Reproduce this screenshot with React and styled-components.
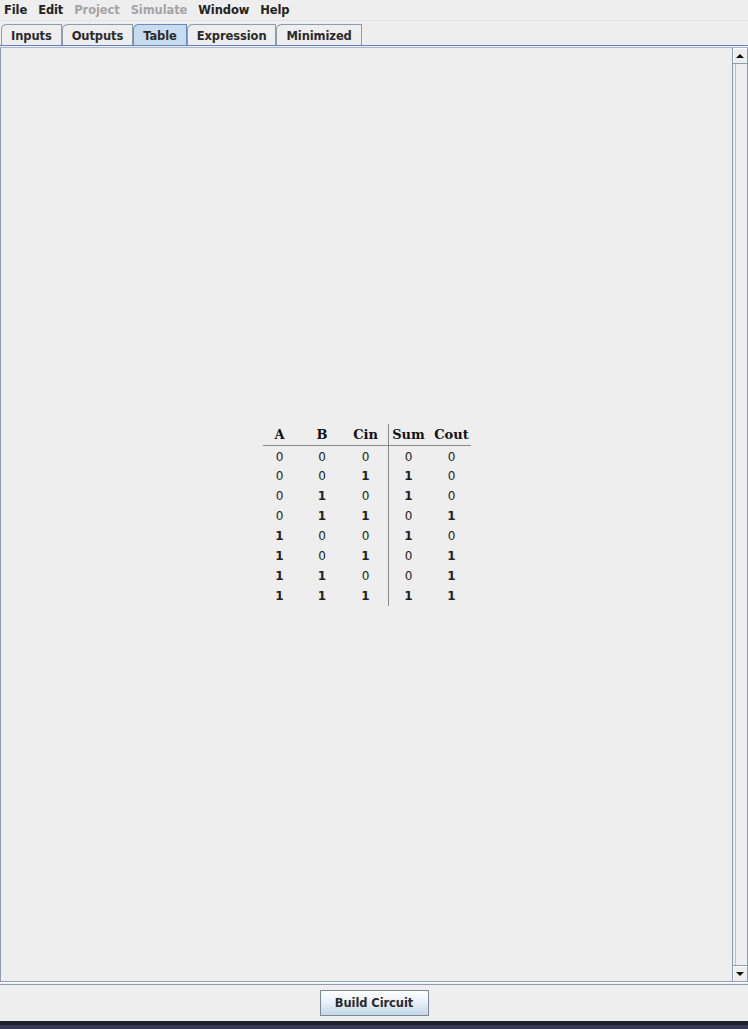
import React from 'react';
import styled, { createGlobalStyle } from 'styled-components';

const GlobalStyle = createGlobalStyle`
    html, body {
        margin: 0;
        padding: 0;
        background: #eeeeee;
        overflow: hidden;
    }
`;

const Window = styled.div`
    width: 748px;
    height: 1029px;
    display: flex;
    flex-direction: column;
    background: #eeeeee;
    font-family: "DejaVu Sans", "Liberation Sans", sans-serif;
`;

const MenuBar = styled.div`
    height: 21px;
    display: flex;
    align-items: center;
    gap: 11px;
    padding-left: 4px;
    border-bottom: 1px solid #e2e2e2;
    box-sizing: border-box;
`;

const MenuItem = styled.span`
    font-size: 11.5px;
    font-weight: bold;
    letter-spacing: -0.1px;
    color: ${p => (p.disabled ? '#a4a4a4' : '#222')};
`;

const TabStrip = styled.div`
    height: 24px;
    display: flex;
    align-items: flex-end;
    padding-left: 1px;
    box-sizing: border-box;
`;

const Tab = styled.div`
    height: 21px;
    box-sizing: border-box;
    display: flex;
    align-items: center;
    padding: 1px 9px 0 9px;
    font-size: 11.5px;
    font-weight: bold;
    letter-spacing: -0.1px;
    color: #2a2a2a;
    background: ${p => (p.selected ? '#c8dcf0' : '#eeeeee')};
    border: 1px solid ${p => (p.selected ? '#6a8ac6' : '#8c9cb2')};
    border-bottom: none;
    border-top-left-radius: 6px 5px;
`;

const Panel = styled.div`
    flex: 1;
    display: flex;
    flex-direction: column;
    border-top: 1px solid #6382bf;
    padding: 1px 0 2px 0;
    min-height: 0;
`;

const ScrollPane = styled.div`
    flex: 1;
    display: flex;
    border: 1px solid #8c9cb2;
    border-top: 1px solid #a8b8cc;
    box-shadow: 0 1px 0 #ffffff;
    min-height: 0;
`;

const Viewport = styled.div`
    flex: 1;
    display: flex;
    align-items: center;
    justify-content: center;
`;

const ScrollBar = styled.div`
    width: 14px;
    display: flex;
    flex-direction: column;
    border-left: 1px solid #8c9cb2;
    background: #eeeeee;
`;

const ScrollButton = styled.div`
    height: 15px;
    display: flex;
    align-items: center;
    justify-content: center;
    border-top: ${p => (p.down ? '1px solid #8c9cb2' : 'none')};
    border-bottom: ${p => (p.down ? 'none' : '1px solid #8c9cb2')};
    box-shadow: inset 1px 1px 0 #ffffff;

    &::after {
        content: '';
        width: 0;
        height: 0;
        border-left: 4px solid transparent;
        border-right: 4px solid transparent;
        ${p => (p.down ? 'border-top: 4px solid #111;' : 'border-bottom: 4px solid #111;')}
    }
`;

const Track = styled.div`
    flex: 1;
    box-shadow: inset 2px 0 0 #eeeeee, inset 3px 0 0 #b8c4d4;
`;

const Table = styled.div`
    display: grid;
    grid-template-columns: 38px 43px 44px 41px 42px;
    width: 208px;
`;

const shift = col => (col === 0 ? 'padding-right: 4px;' : col === 4 ? 'padding-left: 4px;' : '');

const HeadCell = styled.div`
    height: 22px;
    display: flex;
    align-items: center;
    justify-content: center;
    padding-top: 1px;
    box-sizing: border-box;
    font-family: "DejaVu Serif", "Liberation Serif", serif;
    font-weight: bold;
    font-size: 13px;
    color: #111;
    border-bottom: 1px solid #888;
    border-left: ${p => (p.col === 3 ? '1px solid #888' : 'none')};
    ${p => shift(p.col)}
`;

const Cell = styled.div`
    height: 20px;
    display: flex;
    align-items: center;
    justify-content: center;
    box-sizing: border-box;
    padding-top: ${p => (p.first ? '2px' : '0')};
    font-size: 12px;
    font-weight: ${p => (p.value === 1 ? 'bold' : 'normal')};
    color: #222;
    border-left: ${p => (p.col === 3 ? '1px solid #888' : 'none')};
    ${p => shift(p.col)}
`;

const BottomBar = styled.div`
    height: 37px;
    box-sizing: border-box;
    display: flex;
    align-items: center;
    justify-content: center;
    border-top: 1px solid #8c9cb2;
`;

const Button = styled.button`
    width: 109px;
    height: 26px;
    border: 1px solid #7a8a9c;
    background: linear-gradient(#ffffff 0%, #eaf1f8 45%, #c4d6e8 100%);
    font-family: "DejaVu Sans", "Liberation Sans", sans-serif;
    font-size: 11.5px;
    font-weight: bold;
    letter-spacing: -0.1px;
    color: #2a2a2a;
    padding: 0;
`;

const Desktop = styled.div`
    height: 8px;
    background: linear-gradient(#22222c 0 4px, #363a55 4px);
`;

const headers = ['A', 'B', 'Cin', 'Sum', 'Cout'];

const rows = [
    [0, 0, 0, 0, 0],
    [0, 0, 1, 1, 0],
    [0, 1, 0, 1, 0],
    [0, 1, 1, 0, 1],
    [1, 0, 0, 1, 0],
    [1, 0, 1, 0, 1],
    [1, 1, 0, 0, 1],
    [1, 1, 1, 1, 1],
];

const App = () => {
    return (
        <>
            <GlobalStyle />
            <Window>
                <MenuBar>
                    <MenuItem>File</MenuItem>
                    <MenuItem>Edit</MenuItem>
                    <MenuItem disabled>Project</MenuItem>
                    <MenuItem disabled>Simulate</MenuItem>
                    <MenuItem>Window</MenuItem>
                    <MenuItem>Help</MenuItem>
                </MenuBar>
                <TabStrip>
                    <Tab>Inputs</Tab>
                    <Tab>Outputs</Tab>
                    <Tab selected>Table</Tab>
                    <Tab>Expression</Tab>
                    <Tab>Minimized</Tab>
                </TabStrip>
                <Panel>
                    <ScrollPane>
                        <Viewport>
                            <Table>
                                {headers.map((h, i) => (
                                    <HeadCell key={h} col={i}>{h}</HeadCell>
                                ))}
                                {rows.map((r, ri) =>
                                    r.map((v, ci) => (
                                        <Cell key={ri + '-' + ci} value={v} col={ci} first={ri === 0}>
                                            {v}
                                        </Cell>
                                    ))
                                )}
                            </Table>
                        </Viewport>
                        <ScrollBar>
                            <ScrollButton />
                            <Track />
                            <ScrollButton down />
                        </ScrollBar>
                    </ScrollPane>
                </Panel>
                <BottomBar>
                    <Button>Build Circuit</Button>
                </BottomBar>
                <Desktop />
            </Window>
        </>
    );
};

export default App;
